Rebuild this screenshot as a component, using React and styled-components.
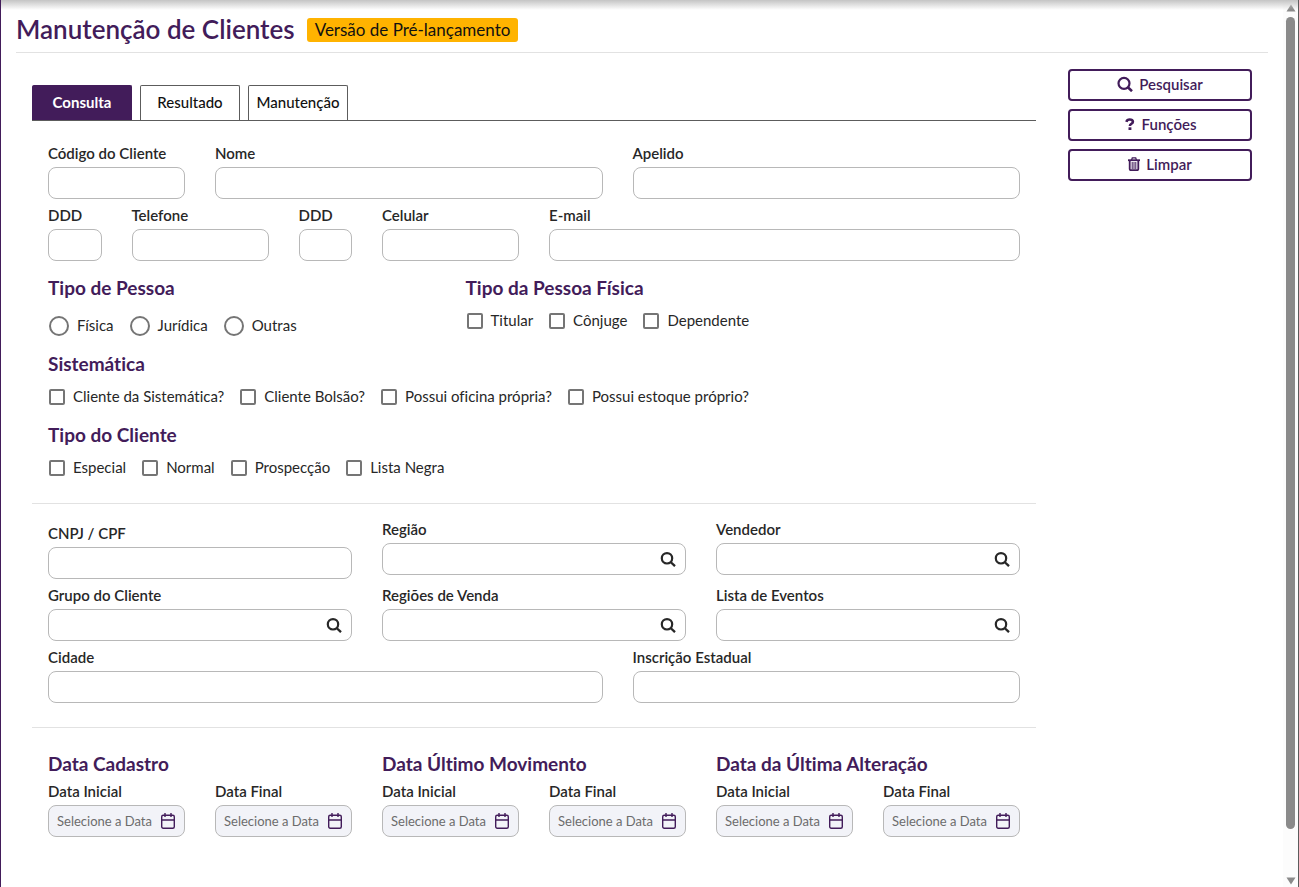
import React, { useId } from "react";
import styled, { createGlobalStyle } from "styled-components";

const tabs = ["Consulta", "Resultado", "Manutenção"];

const SearchIcon = ({ bold }) => (
  <svg width="16" height="16" viewBox="0 0 16 16" fill="none" aria-hidden="true">
    <circle cx="7" cy="7.3" r={bold ? 5.2 : 5.5} stroke="currentColor" strokeWidth="2.2" />
    <path d="M10.6 11L15 15.2" stroke="currentColor" strokeWidth={bold ? 2.3 : 2.6} />
  </svg>
);

const QuestionIcon = () => (
  <svg width="12" height="14" viewBox="0 0 12 14" fill="none" aria-hidden="true">
    <path
      d="M2.4 4.8C2.9 3.2 4 2.5 5.7 2.5c2 0 3.2.9 3.2 2.3 0 2.1-3 1.9-3 4.2"
      stroke="currentColor"
      strokeWidth="2.6"
    />
    <path d="M4.5 10.3h2.9V13H4.5z" fill="currentColor" />
  </svg>
);

const TrashIcon = () => (
  <svg width="12" height="14" viewBox="0 0 12 14" fill="none" aria-hidden="true">
    <path d="M3.6 3L4.3.9h3.4L8.4 3" stroke="currentColor" strokeWidth="1.3" />
    <path d="M0 3.2h12" stroke="currentColor" strokeWidth="1.8" />
    <path
      d="M1.7 3.5V12q0 1.2 1.2 1.2h6.2q1.2 0 1.2-1.2V3.5"
      stroke="currentColor"
      strokeWidth="1.8"
    />
    <path d="M4.2 5v7M6 5v7M7.8 5v7" stroke="currentColor" strokeWidth="1" />
  </svg>
);

const CalendarIcon = () => (
  <svg width="14" height="16" viewBox="0 0 14 16" fill="none" aria-hidden="true">
    <rect x=".7" y="2.2" width="12.6" height="13" rx="1.5" stroke="currentColor" strokeWidth="1.4" />
    <path d="M1 7h12M4 0v4M10 0v4" stroke="currentColor" strokeWidth="1.4" />
  </svg>
);

const Field = ({ label, span, search, date, low }) => {
  const id = useId();
  return (
    <FieldBox $span={span} $low={low}>
      <FieldLabel htmlFor={id}>{label}</FieldLabel>
      <InputBox $date={date}>
        <Input id={id} type="text" placeholder={date ? "Selecione a Data" : undefined} />
        {search && (
          <IconButton type="button" aria-label={`Buscar ${label}`}>
            <SearchIcon bold />
          </IconButton>
        )}
        {date && (
          <IconButton type="button" $purple aria-label={`Abrir ${label}`}>
            <CalendarIcon />
          </IconButton>
        )}
      </InputBox>
    </FieldBox>
  );
};

const Options = ({ items, name, radio }) => (
  <OptionList $radio={radio}>
    {items.map((item) => (
      <Option key={item}>
        {radio ? <Radio name={name} /> : <Checkbox name={name} />}
        <OptionText>{item}</OptionText>
      </Option>
    ))}
  </OptionList>
);

const DatePair = ({ title }) => (
  <Group $span={4}>
    <Subtitle>{title}</Subtitle>
    <PairGrid>
      <Field label="Data Inicial" date />
      <Field label="Data Final" date />
    </PairGrid>
  </Group>
);

const App = () => {
  return (
    <Frame>
      <GlobalStyle />
      <TopShadow />
      <Page>
        <Header>
          <Title>Manutenção de Clientes</Title>
          <Badge>Versão de Pré-lançamento</Badge>
        </Header>
        <Content>
          <Main>
            <TabBar role="tablist">
              {tabs.map((tab, i) => (
                <Tab key={tab} type="button" role="tab" aria-selected={i === 0} $active={i === 0}>
                  {tab}
                </Tab>
              ))}
            </TabBar>

            <Section>
              <Grid>
                <Field label="Código do Cliente" span={2} />
                <Field label="Nome" span={5} />
                <Field label="Apelido" span={5} />
                <Field label="DDD" span={1} />
                <Field label="Telefone" span={2} />
                <Field label="DDD" span={1} />
                <Field label="Celular" span={2} />
                <Field label="E-mail" span={6} />
              </Grid>
              <Groups>
                <Group $span={5}>
                  <Subtitle>Tipo de Pessoa</Subtitle>
                  <Options name="pessoa" radio items={["Física", "Jurídica", "Outras"]} />
                </Group>
                <Group $span={7}>
                  <Subtitle>Tipo da Pessoa Física</Subtitle>
                  <Options name="fisica" items={["Titular", "Cônjuge", "Dependente"]} />
                </Group>
                <Group $span={12}>
                  <Subtitle>Sistemática</Subtitle>
                  <Options
                    name="sistematica"
                    items={[
                      "Cliente da Sistemática?",
                      "Cliente Bolsão?",
                      "Possui oficina própria?",
                      "Possui estoque próprio?",
                    ]}
                  />
                </Group>
                <Group $span={12}>
                  <Subtitle>Tipo do Cliente</Subtitle>
                  <Options name="cliente" items={["Especial", "Normal", "Prospecção", "Lista Negra"]} />
                </Group>
              </Groups>
            </Section>

            <Section $line>
              <Grid>
                <Field label="CNPJ / CPF" span={4} low />
                <Field label="Região" span={4} search />
                <Field label="Vendedor" span={4} search />
                <Field label="Grupo do Cliente" span={4} search />
                <Field label="Regiões de Venda" span={4} search />
                <Field label="Lista de Eventos" span={4} search />
                <Field label="Cidade" span={7} />
                <Field label="Inscrição Estadual" span={5} />
              </Grid>
            </Section>

            <Section $line>
              <Dates>
                <DatePair title="Data Cadastro" />
                <DatePair title="Data Último Movimento" />
                <DatePair title="Data da Última Alteração" />
              </Dates>
            </Section>
          </Main>

          <Actions>
            <ActionButton type="button">
              <SearchIcon />
              Pesquisar
            </ActionButton>
            <ActionButton type="button">
              <QuestionIcon />
              Funções
            </ActionButton>
            <ActionButton type="button">
              <TrashIcon />
              Limpar
            </ActionButton>
          </Actions>
        </Content>
      </Page>
      <ScrollTrack aria-hidden="true">
        <Arrow viewBox="0 0 10 8">
          <path d="M5 .5L9.5 7.5H.5z" />
        </Arrow>
        <Thumb />
        <Arrow viewBox="0 0 10 8">
          <path d="M5 7.5L9.5.5H.5z" />
        </Arrow>
      </ScrollTrack>
    </Frame>
  );
};

export default App;

const GlobalStyle = createGlobalStyle`
  * {
    box-sizing: border-box;
  }

  body {
    margin: 0;
    background: #fff;
    color: #272727;
    font-family: Lato, "Open Sans", sans-serif;
    font-size: 15px;
    font-variant-ligatures: none;
  }

  button,
  input {
    font: inherit;
    color: inherit;
  }
`;

const Frame = styled.div`
  position: relative;
  display: flex;
  min-height: 100vh;
  border-left: 1px solid #421c5a;
  border-right: 1px solid #5c5c5c;
`;

const TopShadow = styled.div`
  position: absolute;
  top: 0;
  left: 0;
  right: 0;
  height: 10px;
  background: linear-gradient(#c4c4c4, rgba(255, 255, 255, 0));
  pointer-events: none;
`;

const Page = styled.div`
  flex: 1;
  min-width: 0;
  padding: 8px 15px 0;
`;

const Header = styled.header`
  display: flex;
  align-items: center;
  gap: 12px;
  height: 45px;
  border-bottom: 1px solid #e2e2e2;
`;

const Title = styled.h1`
  margin: 0;
  padding-bottom: 2px;
  color: #421c5a;
  font-size: 26px;
  font-weight: 600;
  line-height: 32px;
`;

const Badge = styled.span`
  padding: 0 8px;
  border-radius: 3px;
  background: #ffb300;
  color: #111;
  font-size: 17px;
  line-height: 24px;
`;

const Content = styled.div`
  display: flex;
  align-items: flex-start;
`;

const Main = styled.main`
  flex: 1;
  min-width: 0;
  padding: 32px 16px 0;
`;

const TabBar = styled.div`
  display: flex;
  gap: 8px;
  border-bottom: 1px solid #5c5c5c;
`;

const Tab = styled.button`
  width: 100px;
  height: 35px;
  padding: 0 0 2px;
  border: 1px solid ${(props) => (props.$active ? "#421c5a" : "#5c5c5c")};
  border-bottom: 0;
  border-radius: 2px 2px 0 0;
  background: ${(props) => (props.$active ? "#421c5a" : "#fff")};
  color: ${(props) => (props.$active ? "#fff" : "#111")};
  font-weight: ${(props) => (props.$active ? 700 : 500)};
`;

const Section = styled.section`
  padding: ${(props) => (props.$line ? "15px 16px 24px" : "22px 16px 24px")};
  border-top: ${(props) => (props.$line ? "1px solid #e2e2e2" : "0")};
`;

const Grid = styled.div`
  display: grid;
  grid-template-columns: repeat(12, minmax(0, 1fr));
  gap: 6px 30px;
`;

const Groups = styled(Grid)`
  margin-top: 14px;
  row-gap: 14px;
`;

const Dates = styled(Grid)`
  padding-top: 8px;
`;

const PairGrid = styled.div`
  display: grid;
  grid-template-columns: 1fr 1fr;
  gap: 30px;
  margin-top: 4px;
`;

const Group = styled.div`
  grid-column: span ${(props) => props.$span};
  min-width: 0;
`;

const Subtitle = styled.h2`
  margin: 0;
  color: #421c5a;
  font-size: 19px;
  font-weight: 700;
  line-height: 26px;
`;

const FieldBox = styled.div`
  grid-column: span ${(props) => props.$span || 1};
  min-width: 0;
  padding-top: ${(props) => (props.$low ? "4px" : "0")};
`;

const FieldLabel = styled.label`
  display: block;
  margin-bottom: 4px;
  font-weight: 600;
  line-height: 20px;
  white-space: nowrap;
`;

const InputBox = styled.div`
  display: flex;
  align-items: center;
  height: 32px;
  padding: 0 8px;
  border: 1px solid #b8b8b8;
  border-radius: 8px;
  background: ${(props) => (props.$date ? "#f2f3f8" : "#fff")};
`;

const Input = styled.input`
  flex: 1;
  min-width: 0;
  width: 100%;
  padding: 0;
  border: 0;
  outline: 0;
  background: transparent;
  font-size: 13px;

  &::placeholder {
    color: #6c6c6c;
    opacity: 1;
  }
`;

const IconButton = styled.button`
  display: flex;
  padding: 0 1px;
  border: 0;
  background: transparent;
  color: ${(props) => (props.$purple ? "#421c5a" : "#272727")};
`;

const OptionList = styled.div`
  display: flex;
  flex-wrap: wrap;
  gap: 16px;
  padding: ${(props) => (props.$radio ? "14px 1px 0" : "9px 1px 0")};
`;

const Option = styled.label`
  display: flex;
  align-items: center;
  gap: 8px;
`;

const OptionText = styled.span`
  padding-bottom: 2px;
  line-height: 20px;
`;

const Checkbox = styled.input.attrs({ type: "checkbox" })`
  appearance: none;
  width: 16px;
  height: 16px;
  margin: 0;
  border: 2px solid #757575;
  border-radius: 2px;
`;

const Radio = styled.input.attrs({ type: "radio" })`
  appearance: none;
  width: 20px;
  height: 20px;
  margin: 0;
  border: 2px solid #757575;
  border-radius: 50%;
`;

const Actions = styled.aside`
  display: flex;
  flex-direction: column;
  gap: 8px;
  width: 216px;
  padding: 16px 16px 0;
`;

const ActionButton = styled.button`
  display: flex;
  align-items: center;
  justify-content: center;
  gap: 6px;
  height: 32px;
  padding: 0 0 2px;
  border: 2px solid #421c5a;
  border-radius: 4px;
  background: #fff;
  color: #421c5a;
  font-weight: 600;
`;

const ScrollTrack = styled.div`
  display: flex;
  flex-direction: column;
  align-items: center;
  justify-content: space-between;
  width: 15px;
  padding: 4px 0 2px;
  background: #fcfcfc;
`;

const Arrow = styled.svg`
  width: 10px;
  height: 8px;
  fill: #8a8a8a;
`;

const Thumb = styled.div`
  flex: 1;
  width: 9px;
  margin: 5px 0 48px;
  border-radius: 5px;
  background: #8a8a8a;
`;
